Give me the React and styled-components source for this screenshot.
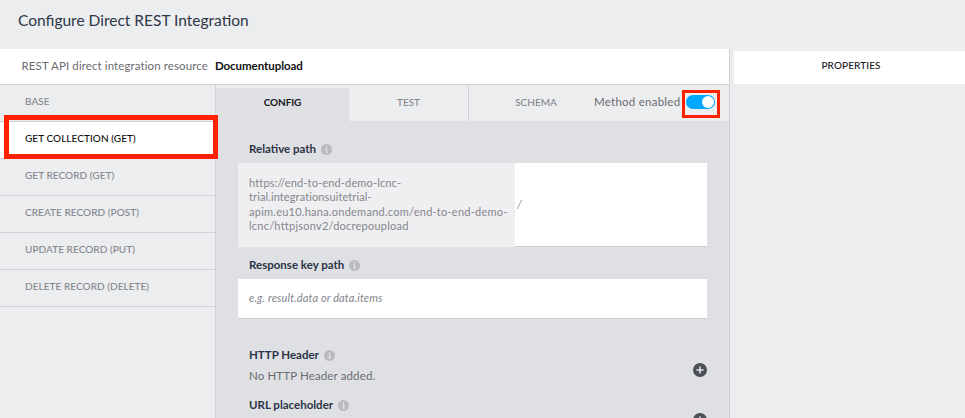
import React from "react";
import styled, { createGlobalStyle } from "styled-components";

const Global = createGlobalStyle`
  *, *::before, *::after { box-sizing: border-box; }
  html, body { margin: 0; height: 418px; overflow: hidden; background: #ecedef; }
  body { font-family: Lato, "Open Sans", sans-serif; font-size: 11.5px; color: #6b6c70; }
`;

const Page = styled.div`
  width: 965px;
  height: 418px;
  overflow: hidden;
  display: flex;
  flex-direction: column;
  background: #ecedef;
`;

const Title = styled.h1`
  margin: 0;
  height: 49px;
  padding: 10px 18px 0;
  font-size: 15.5px;
  line-height: 20px;
  font-weight: 400;
  color: #2e3748;
  white-space: nowrap;
`;

const Columns = styled.div`
  display: flex;
  flex: 1;
  min-height: 0;
`;

const Main = styled.main`
  width: 730px;
  display: flex;
  flex-direction: column;
  border-right: 1px solid #cfd1d7;
`;

const Resource = styled.header`
  height: 36px;
  flex: none;
  display: flex;
  gap: 7px;
  padding: 0 0 2px 21.5px;
  align-items: center;
  background: #fff;
  border-bottom: 1px solid #cfd1d7;
  letter-spacing: 0.1px;
  white-space: nowrap;
`;

const ResourceName = styled.strong`
  color: #111;
  font-weight: 700;
  letter-spacing: -0.05px;
`;

const Body = styled.div`
  display: flex;
  flex: 1;
  min-height: 0;
`;

const Sidebar = styled.nav`
  width: 216px;
  flex: none;
  border-right: 1px solid #cfd1d7;
`;

const Method = styled.div`
  position: relative;
  height: 37px;
  padding: 9px 0 0 25px;
  border-bottom: 1px solid #cfd1d7;
  font-size: 10px;
  line-height: 14px;
  font-weight: 500;
  letter-spacing: 0.06px;
  color: ${(p) => (p.$active ? "#111" : "#83868d")};
  background: ${(p) => (p.$active ? "#fff" : "transparent")};
  white-space: nowrap;
`;

const Highlight = styled.span`
  position: absolute;
  z-index: 2;
  left: 4px;
  top: -7px;
  width: 214px;
  height: 44px;
  border: 5px solid #ff2200;
`;

const Content = styled.section`
  flex: 1;
  display: flex;
  flex-direction: column;
  min-width: 0;
`;

const TabBar = styled.div`
  height: 36px;
  flex: none;
  display: flex;
`;

const Tab = styled.div`
  width: ${(p) => p.$width}px;
  margin-top: ${(p) => (p.$active ? 3 : 0)}px;
  padding-top: ${(p) => (p.$active ? 7 : 10)}px;
  border-right: ${(p) => (p.$divider ? "1px solid #cfd1d7" : "0")};
  background: ${(p) => (p.$active ? "#dfe0e4" : "transparent")};
  color: ${(p) => (p.$active ? "#17181b" : "#83868d")};
  font-size: 10px;
  line-height: 14px;
  font-weight: ${(p) => (p.$active ? 700 : 500)};
  letter-spacing: ${(p) => (p.$active ? -0.1 : 0)}px;
  text-align: center;
`;

const Enabled = styled.div`
  display: flex;
  align-items: flex-start;
  margin-left: -9px;
  padding-top: 5px;
`;

const EnabledLabel = styled.span`
  width: 88px;
  padding-top: 4px;
  line-height: 16px;
  letter-spacing: 0.25px;
  white-space: nowrap;
`;

const ToggleFrame = styled.div`
  width: 38px;
  height: 28px;
  border: 3px solid #ff2200;
  padding: 2px 0 0 1px;
`;

const Toggle = styled.div`
  width: 29px;
  height: 14px;
  border-radius: 7px;
  padding: 1px;
  display: flex;
  justify-content: flex-end;
  background: #00a8ff;
`;

const Knob = styled.span`
  width: 12px;
  height: 12px;
  border-radius: 50%;
  background: #fff;
`;

const Panel = styled.div`
  flex: 1;
  min-height: 0;
  overflow: hidden;
  padding: 20px 22px 0;
  background: #dfe0e4;
`;

const FieldLabel = styled.div`
  display: flex;
  align-items: center;
  gap: 5px;
  height: 16px;
  padding: 0 0 1px 11px;
  color: #2b3446;
  font-weight: 700;
  white-space: nowrap;
  svg { margin-top: 2px; }
`;

const PathField = styled.div`
  display: flex;
  height: 84px;
  margin: 6px 0 10px;
`;

const BaseUrl = styled.div`
  width: 277px;
  padding: 13px 0 0 11px;
  background: #efeff1;
  color: #83868d;
  font-size: 11px;
  line-height: 14.4px;
  white-space: nowrap;
`;

const UrlLine = styled.div`
  letter-spacing: ${(p) => p.$spacing}px;
`;

const PathInput = styled.div`
  flex: 1;
  padding: 34px 0 0 2px;
  background: #fff;
  border-bottom: 1px solid #c9cbd1;
  color: #83868d;
  font-size: 11px;
  font-style: italic;
  line-height: 14px;
`;

const KeyInput = styled.div`
  height: 40px;
  margin: 6px 0 28px;
  padding: 12px 11px 0;
  background: #fff;
  border-bottom: 1px solid #c9cbd1;
  color: #83868d;
  font-size: 11px;
  font-style: italic;
  line-height: 14px;
  letter-spacing: 0.13px;
`;

const Group = styled.div`
  display: flex;
  justify-content: space-between;
  height: 50px;
`;

const EmptyNote = styled.div`
  padding: 5px 0 0 11px;
  line-height: 16px;
  letter-spacing: 0.13px;
`;

const AddButton = styled.div`
  width: 14px;
  height: 14px;
  margin-top: 16px;
  svg { display: block; }
`;

const Properties = styled.aside`
  flex: 1;
  height: 33px;
  margin: 2px 0 0 4px;
  padding: 7px 0 0 3px;
  background: #fff;
  color: #17181b;
  font-size: 10px;
  line-height: 14px;
  font-weight: 500;
  letter-spacing: 0.1px;
  text-align: center;
`;

const InfoIcon = () => (
  <svg width="11" height="11" viewBox="0 0 11 11">
    <circle cx="5.5" cy="5.5" r="5.5" fill="#b9bbc1" />
    <path d="M5.5 2.2v1.4M4.6 4.9h1v3M4.4 8.2h2.2" stroke="#e6e7ea" strokeWidth="1.2" fill="none" />
  </svg>
);

const PlusIcon = () => (
  <svg width="14" height="14" viewBox="0 0 14 14">
    <circle cx="7" cy="7" r="7" fill="#4c4f57" />
    <path d="M7 3.4v7.2M3.4 7h7.2" stroke="#e3e4e7" strokeWidth="1.6" />
  </svg>
);

const methods = [
  ["BASE"],
  ["GET COLLECTION (GET)", true],
  ["GET RECORD (GET)"],
  ["CREATE RECORD (POST)"],
  ["UPDATE RECORD (PUT)"],
  ["DELETE RECORD (DELETE)"],
];

const urlLines = [
  ["https://end-to-end-demo-lcnc-", 0.15],
  ["trial.integrationsuitetrial-", 0.11],
  ["apim.eu10.hana.ondemand.com/end-to-end-demo-", 0.25],
  ["lcnc/httpjsonv2/docrepoupload", 0.23],
];

export default function App() {
  return (
    <>
      <Global />
      <Page>
        <Title>Configure Direct REST Integration</Title>
        <Columns>
          <Main>
            <Resource>
              <span>REST API direct integration resource</span>
              <ResourceName>Documentupload</ResourceName>
            </Resource>
            <Body>
              <Sidebar>
                {methods.map(([name, active]) => (
                  <Method key={name} $active={active}>
                    {name}
                    {active && <Highlight />}
                  </Method>
                ))}
              </Sidebar>
              <Content>
                <TabBar>
                  <Tab $width={133} $active>CONFIG</Tab>
                  <Tab $width={120} $divider>TEST</Tab>
                  <Tab $width={134}>SCHEMA</Tab>
                  <Enabled>
                    <EnabledLabel>Method enabled</EnabledLabel>
                    <ToggleFrame>
                      <Toggle><Knob /></Toggle>
                    </ToggleFrame>
                  </Enabled>
                </TabBar>
                <Panel>
                  <FieldLabel>Relative path<InfoIcon /></FieldLabel>
                  <PathField>
                    <BaseUrl>
                      {urlLines.map(([line, spacing]) => (
                        <UrlLine key={line} $spacing={spacing}>{line}</UrlLine>
                      ))}
                    </BaseUrl>
                    <PathInput>/</PathInput>
                  </PathField>
                  <FieldLabel>Response key path<InfoIcon /></FieldLabel>
                  <KeyInput>e.g. result.data or data.items</KeyInput>
                  <Group>
                    <div>
                      <FieldLabel>HTTP Header<InfoIcon /></FieldLabel>
                      <EmptyNote>No HTTP Header added.</EmptyNote>
                    </div>
                    <AddButton><PlusIcon /></AddButton>
                  </Group>
                  <Group>
                    <FieldLabel>URL placeholder<InfoIcon /></FieldLabel>
                    <AddButton><PlusIcon /></AddButton>
                  </Group>
                </Panel>
              </Content>
            </Body>
          </Main>
          <Properties>PROPERTIES</Properties>
        </Columns>
      </Page>
    </>
  );
}
